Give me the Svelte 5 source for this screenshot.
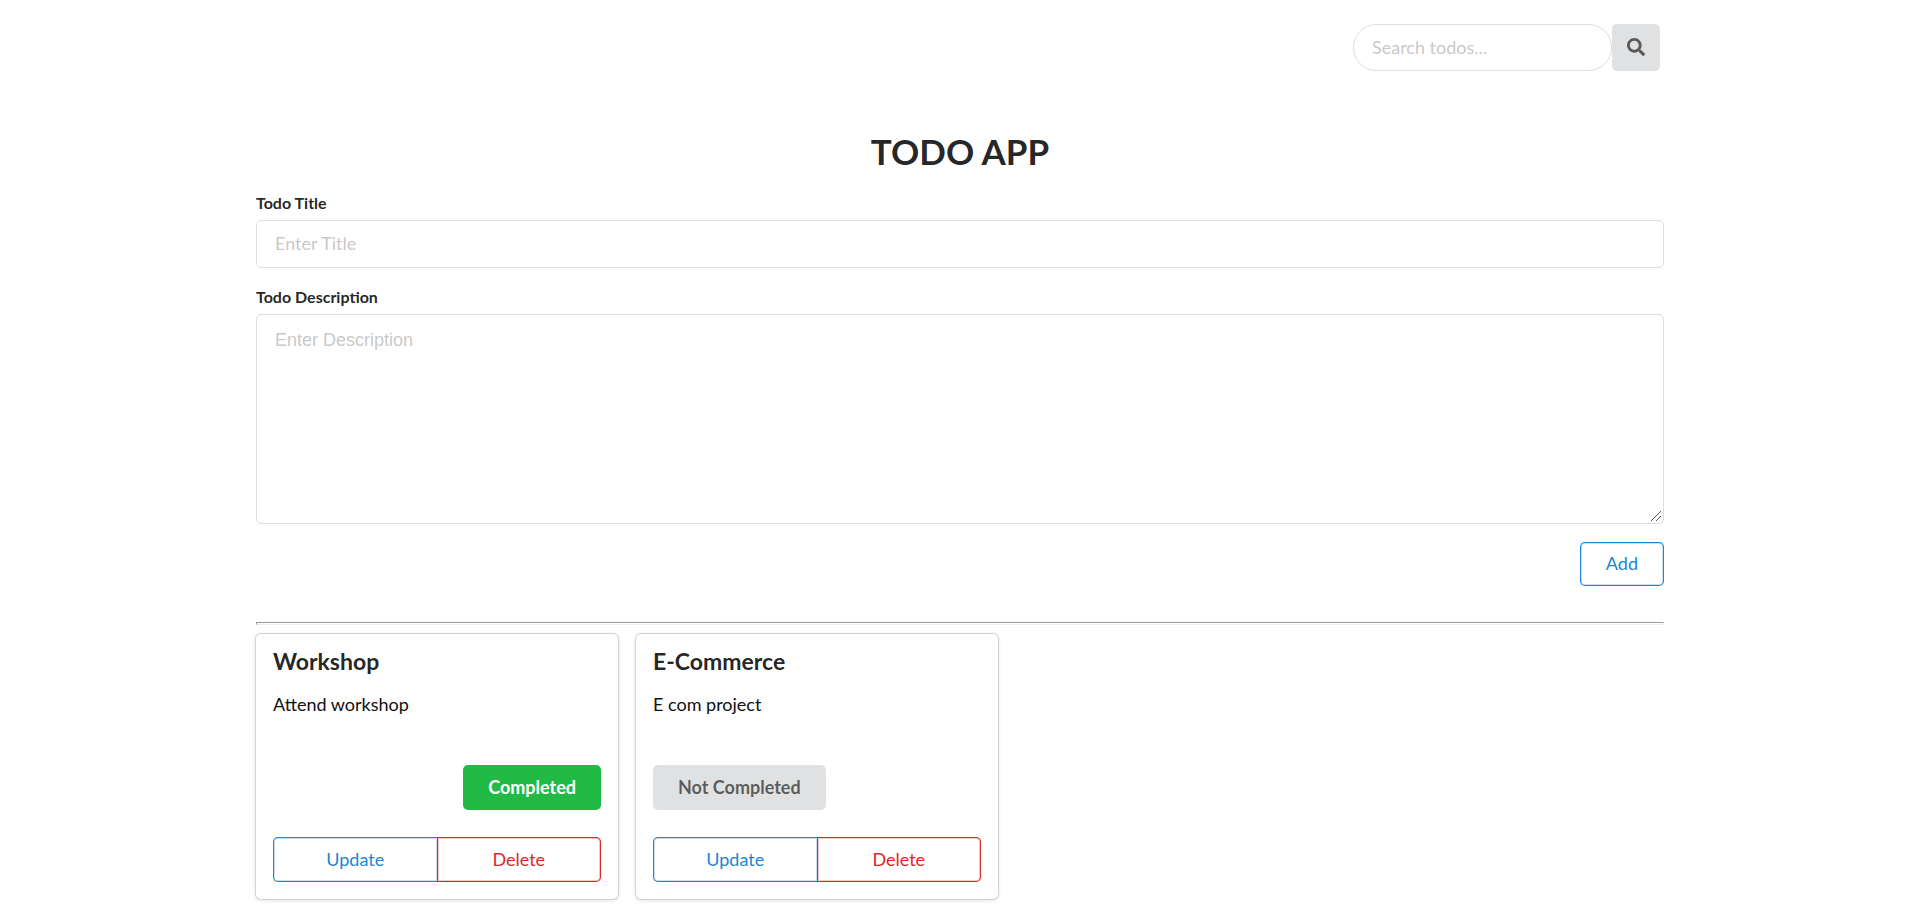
<script>
  let search = $state('');
  let title = $state('');
  let description = $state('');
  let nextId = 3;
  let todos = $state([
    { id: 1, title: 'Workshop', description: 'Attend workshop', completed: true },
    { id: 2, title: 'E-Commerce', description: 'E com project', completed: false }
  ]);
  let visible = $derived(
    todos.filter((todo) => todo.title.toLowerCase().includes(search.trim().toLowerCase()))
  );

  function add(event) {
    event.preventDefault();
    if (!title.trim()) return;
    todos.push({ id: nextId++, title, description, completed: false });
    title = '';
    description = '';
  }

  function update(todo) {
    title = todo.title;
    description = todo.description;
    remove(todo);
  }

  function remove(todo) {
    todos = todos.filter((item) => item.id !== todo.id);
  }
</script>

<main class="container">
  <form class="search" role="search" onsubmit={(event) => event.preventDefault()}>
    <input class="field-control round" type="text" placeholder="Search todos..." aria-label="Search todos" bind:value={search} />
    <button class="search-button" type="submit" aria-label="Search">
      <svg viewBox="0 0 512 512" aria-hidden="true">
        <path d="M505 442.700L405.300 343c-4.500-4.500-10.600-7-17-7H372c27.600-35.300 44-79.700 44-128C416 93.100 322.900 0 208 0S0 93.100 0 208s93.100 208 208 208c48.300 0 92.700-16.400 128-44v16.300c0 6.400 2.500 12.500 7 17l99.700 99.700c9.400 9.400 24.600 9.400 33.900 0l28.300-28.300c9.400-9.400 9.400-24.600.1-34zM208 336c-70.700 0-128-57.200-128-128 0-70.700 57.200-128 128-128 70.700 0 128 57.200 128 128 0 70.700-57.200 128-128 128z" />
      </svg>
    </button>
  </form>

  <h1>TODO APP</h1>

  <form class="todo-form" onsubmit={add}>
    <div class="field">
      <label for="todo-title">Todo Title</label>
      <input id="todo-title" class="field-control" type="text" placeholder="Enter Title" bind:value={title} />
    </div>
    <div class="field">
      <label for="todo-description">Todo Description</label>
      <textarea id="todo-description" class="field-control" rows="8" placeholder="Enter Description" bind:value={description}></textarea>
    </div>
    <button class="button outline blue add" type="submit">Add</button>
  </form>

  <hr />

  <section class="cards">
    {#each visible as todo (todo.id)}
      <article class="card">
        <h2>{todo.title}</h2>
        <p>{todo.description}</p>
        <button
          class="button status"
          class:completed={todo.completed}
          type="button"
          onclick={() => (todo.completed = !todo.completed)}
        >{todo.completed ? 'Completed' : 'Not Completed'}</button>
        <div class="actions">
          <button class="button outline blue" type="button" onclick={() => update(todo)}>Update</button>
          <button class="button outline red" type="button" onclick={() => remove(todo)}>Delete</button>
        </div>
      </article>
    {/each}
  </section>
</main>

<style>
  :global(body) {
    background: #fff;
    color: rgba(0, 0, 0, 0.87);
    font-family: Lato, "Liberation Sans", Arial, sans-serif;
    font-size: 18px;
    line-height: 25px;
  }

  * {
    box-sizing: border-box;
  }

  .container {
    max-width: 1408px;
    margin: 0 auto;
    padding: 24px 0 16px;
  }

  .search {
    display: flex;
    justify-content: flex-end;
    padding-right: 4px;
  }

  .field-control {
    display: block;
    width: 100%;
    margin: 0;
    padding: 11px 18px 13px;
    border: 1px solid #dcdddd;
    border-radius: 5px;
    background: #fff;
    color: inherit;
    font-family: inherit;
    font-size: 18px;
    line-height: 22px;
    outline: 0;
  }

  .field-control::placeholder {
    color: rgba(191, 191, 191, 0.87);
    opacity: 1;
  }

  .field-control:focus {
    border-color: #85b7d9;
  }

  .field-control.round {
    width: 259px;
    height: 47px;
    border-radius: 24px;
  }

  .search-button {
    display: flex;
    align-items: center;
    justify-content: center;
    width: 48px;
    padding: 0 0 1px;
    border: 0;
    border-radius: 5px;
    background: #e0e1e2;
    color: rgba(0, 0, 0, 0.6);
    cursor: pointer;
  }

  .search-button svg {
    width: 18px;
    height: 18px;
    fill: currentColor;
  }

  h1 {
    margin: 58px 0 18px;
    font-size: 35px;
    line-height: 45px;
    font-weight: 700;
    text-align: center;
  }

  .todo-form {
    display: flex;
    flex-direction: column;
    gap: 18px;
  }

  label {
    display: block;
    margin-bottom: 7px;
    font-size: 16px;
    line-height: 21px;
    font-weight: 700;
  }

  textarea.field-control {
    height: 210px;
    padding-top: 14px;
    font-family: "Liberation Sans", Arial, sans-serif;
    resize: vertical;
  }

  textarea::-webkit-resizer {
    background: url("data:image/svg+xml,%3Csvg xmlns='http://www.w3.org/2000/svg' width='15' height='15'%3E%3Cpath d='M3 13L13 3M8 13L13 8' stroke='%23555'/%3E%3C/svg%3E") no-repeat right bottom;
  }

  .button {
    height: 45px;
    padding: 0 26px 2px;
    border: 0;
    border-radius: 5px;
    background: #e0e1e2;
    color: rgba(0, 0, 0, 0.6);
    font-family: inherit;
    font-size: 18px;
    line-height: 18px;
    font-weight: 700;
    cursor: pointer;
  }

  .outline {
    background: transparent;
    font-weight: 400;
  }

  .blue {
    color: #2185d0;
    box-shadow: inset 0 0 0 1px #2185d0, inset 0 0 0 2px rgba(33, 133, 208, 0.25);
  }

  .red {
    color: #db2828;
    box-shadow: inset 0 0 0 1px #db2828, inset 0 0 0 2px rgba(219, 40, 40, 0.25);
  }

  .add {
    align-self: flex-end;
    height: 44px;
  }

  hr {
    height: 3px;
    margin: 36px 0 9px;
    border: 1px solid #9a9a9a;
    border-right-color: #eee;
    border-bottom-color: #eee;
  }

  .cards {
    display: flex;
    flex-wrap: wrap;
    gap: 18px;
  }

  .card {
    display: flex;
    flex-direction: column;
    width: 362px;
    padding: 15px 17px 17px;
    border-radius: 5px;
    background: #fff;
    box-shadow: 0 1px 4px 0 #d4d4d5, 0 0 0 1px #d4d4d5;
  }

  h2 {
    margin: 0;
    font-size: 23px;
    line-height: 25px;
    font-weight: 700;
  }

  p {
    margin: 18px 0 48px;
    color: #111;
  }

  .status {
    align-self: flex-start;
    padding: 0 25px 2px;
  }

  .completed {
    align-self: flex-end;
    background: #21ba45;
    color: #fff;
  }

  .actions {
    display: flex;
    margin-top: 27px;
  }

  .actions .button {
    flex: 1;
    padding: 0 0 2px;
  }

  .actions .blue {
    border-radius: 5px 0 0 5px;
  }

  .actions .red {
    margin-left: -1px;
    border-radius: 0 5px 5px 0;
  }
</style>
